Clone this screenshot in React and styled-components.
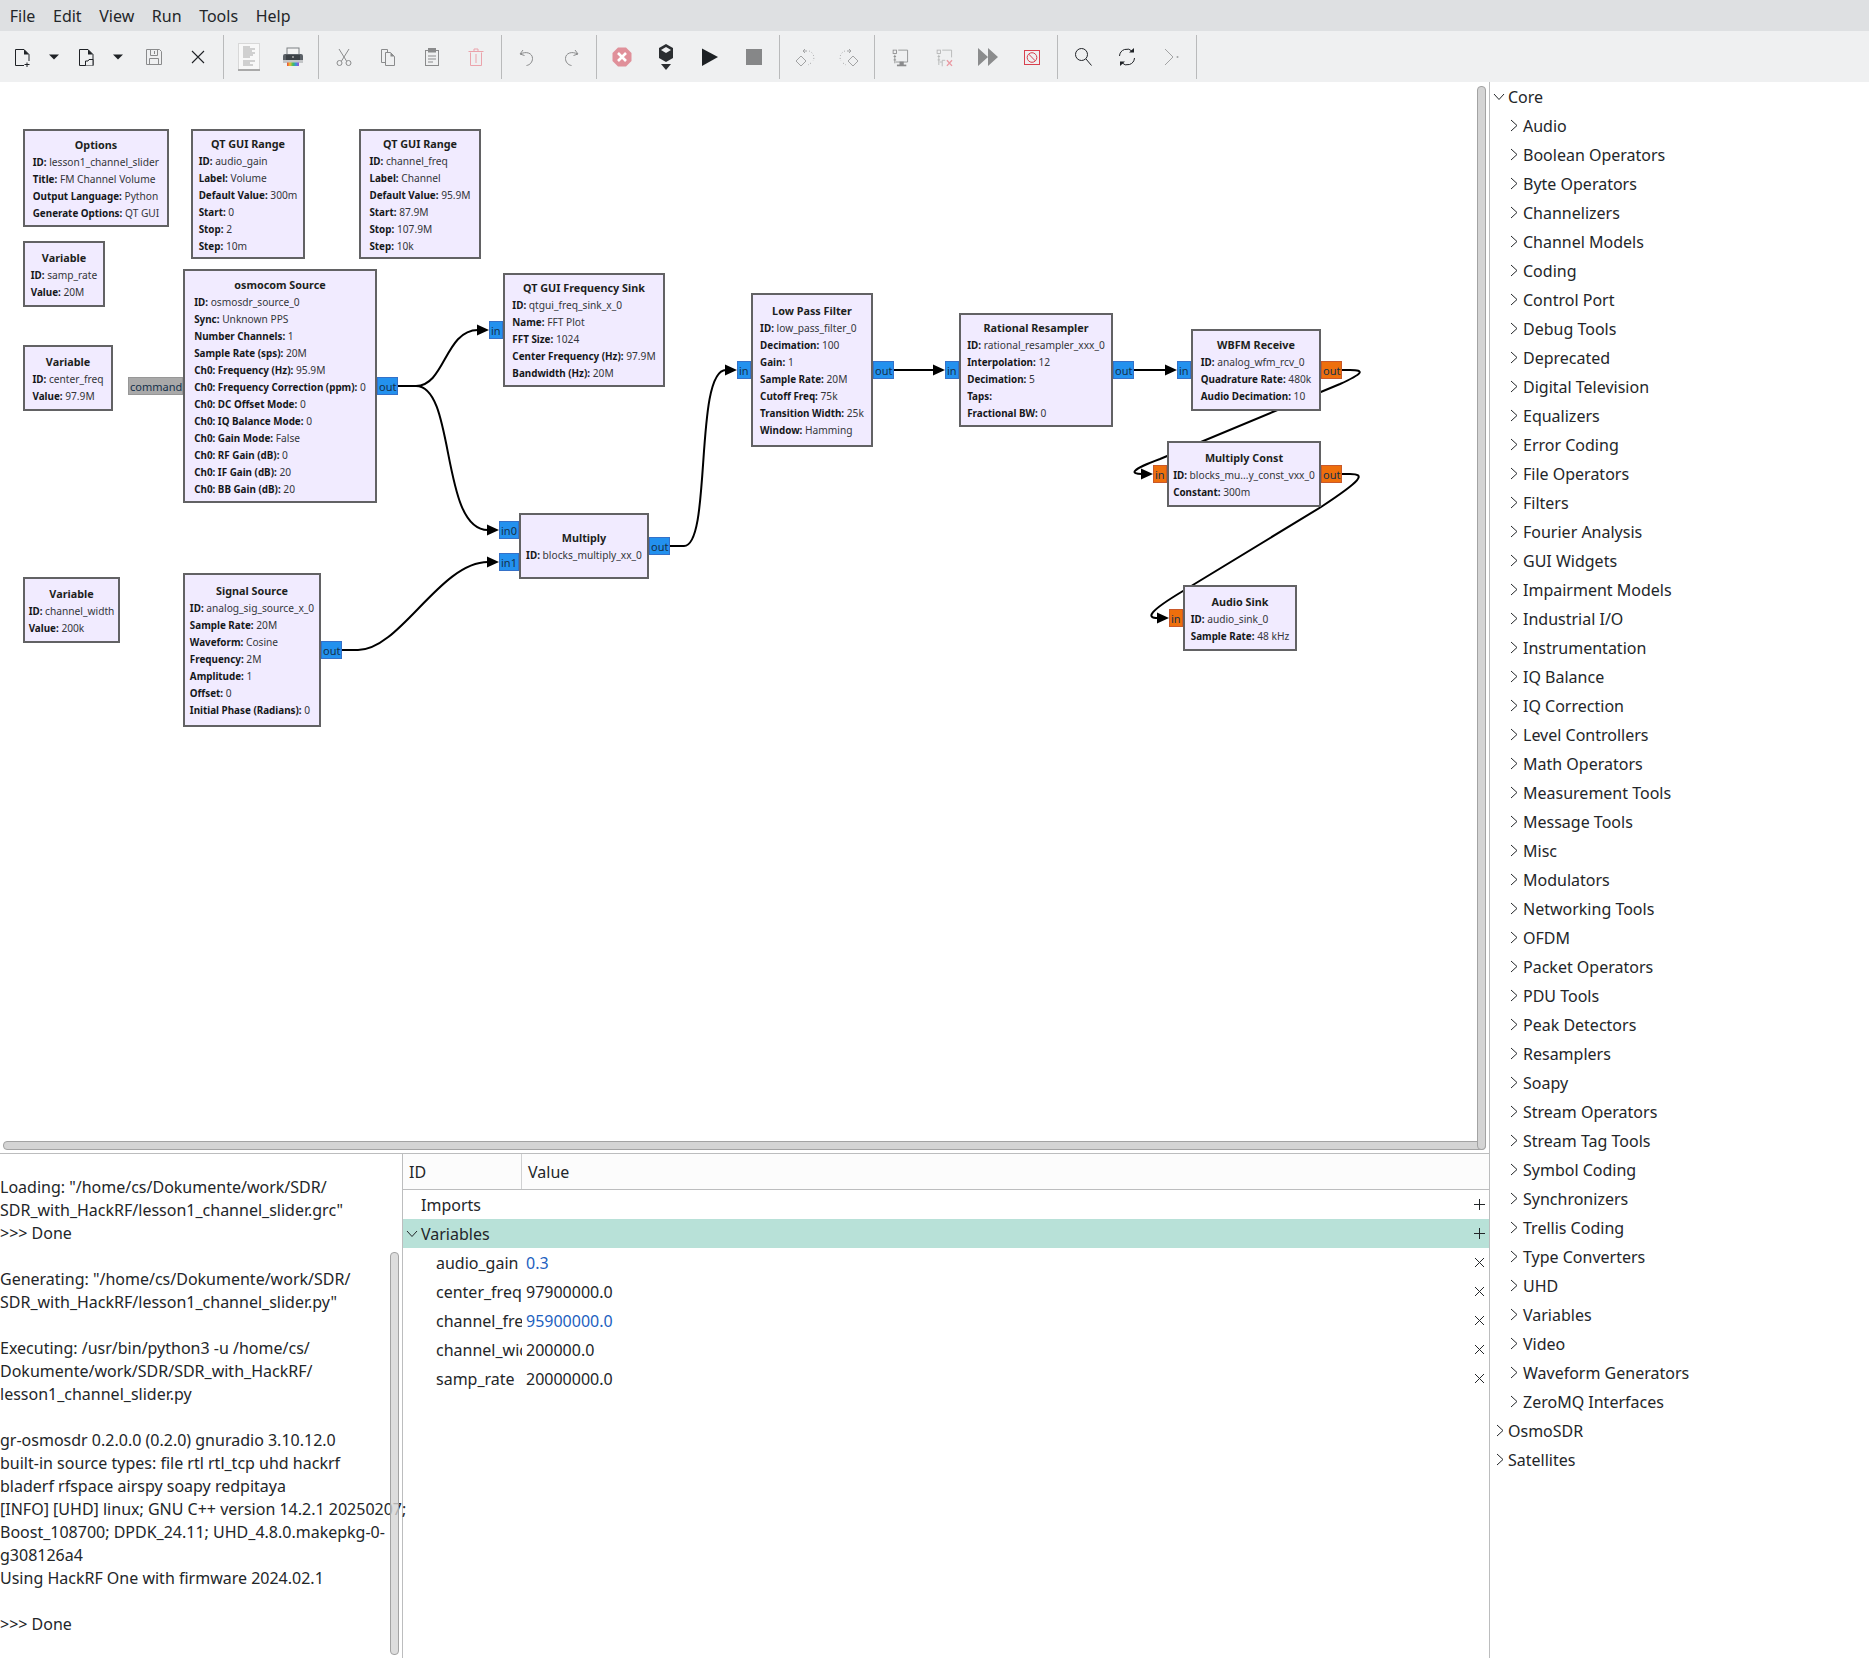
import React from 'react';
import styled, { createGlobalStyle } from 'styled-components';

const Global = createGlobalStyle`
  html, body { margin: 0; padding: 0; background: #fff; }
  body { font-family: "Noto Sans", sans-serif; color: #232629; }
`;

const Page = styled.div`
  width: 1869px; height: 1658px; display: flex; flex-direction: column; overflow: hidden;
  font-size: 16px; color: #232629;
`;
const MenuBar = styled.div`
  height: 31px; background: #dee0e2; display: flex; align-items: flex-start; padding-left: 1px; flex: none;
`;
const MenuItem = styled.div` padding: 0 8.8px; line-height: 32px; font-size: 16px; `;
const Toolbar = styled.div`
  height: 51px; background: #eff0f1; display: flex; align-items: center; flex: none;
`;
const ToolButton = styled.div`
  width: ${p => p.$w || 44}px; height: 51px; display: flex; align-items: center; justify-content: center; flex: none;
  margin-right: ${p => p.$mr || 0}px;
`;
const Sep = styled.div` width: 1px; height: 44px; background: #b9babb; margin: 0 3px; flex: none; `;
const Main = styled.div` flex: 1; display: flex; min-height: 0; `;
const LeftColumn = styled.div` width: 1489px; display: flex; flex-direction: column; flex: none; `;
const Canvas = styled.div` height: 1071px; position: relative; background: #fff; flex: none; overflow: hidden; `;
const Wires = styled.svg` position: absolute; left: 0; top: 0; `;
const HScroll = styled.div`
  position: absolute; left: 3px; top: 1059px; width: 1481px; height: 7px;
  background: #d4d4d4; border: 1px solid #a3a3a3; border-radius: 4px;
`;
const VScroll = styled.div`
  position: absolute; left: 1477px; top: 4px; width: 7px; height: 1062px;
  background: #d4d4d4; border: 1px solid #a3a3a3; border-radius: 4px;
`;
const Block = styled.div`
  position: absolute; box-sizing: border-box; border: 2px solid #626264; background: #f1ebff;
  display: flex; flex-direction: column; align-items: center; justify-content: center;
  line-height: 17px; color: #1d1f21; white-space: nowrap;
`;
const BlockTitle = styled.div` font-weight: 700; font-size: 10.8px; line-height: 19px; `;
const AttrList = styled.div` display: flex; flex-direction: column; `;
const Attr = styled.div` color: #34363a; font-size: 10.2px; `;
const AttrKey = styled.b` font-weight: 700; font-size: 9.85px; color: #15171a; `;
const Port = styled.div`
  position: absolute; box-sizing: border-box; top: ${p => p.$top}px; height: 18px; width: ${p => p.$w}px;
  ${p => p.$side === 'in' ? `right: calc(100% + 2px);` : `left: calc(100% + 2px);`}
  background: ${p => p.$kind === 'orange' ? '#ee6f0c' : p.$kind === 'gray' ? '#a9a9a9' : '#2391ee'};
  border: 1.5px solid ${p => p.$kind === 'orange' ? '#c9592a' : p.$kind === 'gray' ? '#979797' : '#3571c8'};
  font-size: 11px; line-height: 17px; color: #14304a; padding-left: 1px; overflow: hidden;
`;
const BottomRow = styled.div` flex: 1; display: flex; border-top: 1px solid #bcbdbe; min-height: 0; `;
const Console = styled.div`
  width: 403px; flex: none; position: relative; box-sizing: border-box; padding-top: 22px;
  font-size: 16px; line-height: 23px; white-space: pre; border-right: 1px solid #bcbdbe; background: #fff;
`;
const ConsoleScroll = styled.div`
  position: absolute; left: 390px; top: 98px; width: 7px; height: 401px;
  background: #d4d4d4cc; border: 1px solid #a3a3a3; border-radius: 4px;
`;
const TablePane = styled.div` flex: 1; display: flex; flex-direction: column; min-width: 0; `;
const TableHead = styled.div`
  height: 35px; background: #fcfcfc; border-bottom: 1px solid #bcbdbe; display: flex; flex: none;
`;
const HeadCell = styled.div`
  width: ${p => p.$w ? p.$w + 'px' : 'auto'}; box-sizing: border-box; padding-left: 6px; line-height: 36px; font-size: 16px;
  ${p => p.$w ? 'border-right: 1px solid #d0d1d2;' : ''}
`;
const VarRow = styled.div`
  height: 29px; display: flex; align-items: center; position: relative; font-size: 16px;
  background: ${p => p.$selected ? '#b8e1d8' : 'transparent'};
`;
const RowChevron = styled.span` width: 18px; padding-left: 3px; box-sizing: border-box; display: flex; flex: none; `;
const GroupName = styled.span` padding-left: ${p => p.$pad}px; `;
const VarName = styled.span` width: 86px; margin-left: 33px; overflow: hidden; white-space: nowrap; flex: none; `;
const VarValue = styled.span` margin-left: 4px; color: ${p => p.$edited ? '#1d5fc0' : '#232629'}; `;
const RowAction = styled.span` position: absolute; right: 1px; width: 18px; height: 18px; display: flex; align-items: center; justify-content: center; `;
const TreePane = styled.div` flex: 1; border-left: 1px solid #bcbdbe; font-size: 16px; `;
const TreeRow = styled.div`
  height: 29px; display: flex; align-items: center; padding-left: ${p => p.$level ? 20 : 3}px; white-space: nowrap;
`;
const TreeChevronBox = styled.span`
  width: ${p => p.$level ? 13 : 15}px; display: flex; flex: none;
  padding-left: ${p => p.$nudge || 0}px; box-sizing: border-box;
`;

const ChevR = ({ s = 15 }) => (
  <svg width="8" height={s} viewBox="0 0 8 15"><path d="M1 2 L7 7.5 L1 13" fill="none" stroke="#232629" strokeWidth="1" /></svg>
);
const ChevD = () => (
  <svg width="12" height="8" viewBox="0 0 12 8"><path d="M1 1 L6 6.5 L11 1" fill="none" stroke="#232629" strokeWidth="1" /></svg>
);

const G = '#8a8b8c';
const K = '#1f2226';
const S = ({ children, w = 22, h = 22 }) => (
  <svg width={w} height={h} viewBox={`0 0 ${w} ${h}`}>{children}</svg>
);

const icons = {
  new: <S><path d="M4.5 19.5V3.5H13L18 8.5V15M13 19.5H4.5" fill="none" stroke={K} /><path d="M13 3.5V8.5H18Z" fill={K} /><path d="M16 16.5V21M13.5 18.5H18.5" stroke={K} /></S>,
  open: <S><path d="M4.5 3.5H13L18 8.5V19.5H4.5Z" fill="none" stroke={K} /><path d="M13 3.5V8.5H18Z" fill={K} /><path d="M10.5 19.5V15H13L14 13.5H18V19.5" fill="#eff0f1" stroke={K} /></S>,
  drop: <S w={12} h={8}><path d="M1 1.5H11L6 6.5Z" fill={K} /></S>,
  save: <S><path d="M3.5 3.5H16.5L18.5 5.5V18.5H3.5Z" fill="none" stroke={G} /><path d="M7.5 3.5V9.5H14.5V3.5M6.5 18.5V12.5H15.5V18.5M11.5 5V8" fill="none" stroke={G} /></S>,
  close: <S><path d="M5 5L17 17M17 5L5 17" stroke={K} strokeWidth="1.1" /></S>,
  page: <S w={22} h={28}><rect x="0.5" y="0.5" width="21" height="26" fill="#f8f8f8" stroke="#d8d8d8" /><rect x="0" y="26" width="22" height="2" fill="#a9a9a9" /><path d="M5 4H12M5 6H17M5 8H14M5 10H17M5 12H15M5 14H12M5 18H17M5 20H12M5 22H15" stroke="#a8a8a8" strokeWidth="1" /></S>,
  print: <S h={20}><rect x="5" y="1" width="12" height="7" fill="#f4f4f4" stroke="#7d8083" /><path d="M1 9Q1 7 3 7H19Q21 7 21 9V16H1Z" fill="#5b6167" /><rect x="4" y="8" width="14" height="7" fill="#3c4146" /><circle cx="11" cy="10" r="1" fill="#aaa" /><rect x="1" y="13" width="20" height="3" fill="#c4c6c8" /><rect x="5" y="15.5" width="12" height="3.5" fill="url(#rb)" /><defs><linearGradient id="rb"><stop offset="0" stopColor="#e84b3c" /><stop offset=".25" stopColor="#f0c030" /><stop offset=".5" stopColor="#3cc060" /><stop offset=".75" stopColor="#3c90e0" /><stop offset="1" stopColor="#a050d0" /></linearGradient></defs></S>,
  cut: <S><path d="M6 3L13.5 15M16 3L8.5 15" stroke={G} fill="none" /><circle cx="6.5" cy="17" r="2.5" fill="none" stroke={G} /><circle cx="15.5" cy="17" r="2.5" fill="none" stroke={G} /></S>,
  copy: <S><path d="M4.5 3.5H10.5V6M4.5 3.5V16.5H8" fill="none" stroke={G} /><path d="M8.5 6.5H13.5L17.5 10.5V19.5H8.5Z" fill="none" stroke={G} /><path d="M13.5 6.5V10.5H17.5Z" fill={G} /></S>,
  paste: <S><rect x="4.5" y="4.5" width="13" height="15" fill="none" stroke={G} /><rect x="7" y="2" width="8" height="4.5" fill={G} /><path d="M7 10H15M7 13H15M7 16H12" stroke={G} /></S>,
  trash: <S><path d="M5.5 6.5V19.5H16.5V6.5M3.5 5.5H18.5M9 5V3H13V5M11 8V17" fill="none" stroke="#eba3ab" /></S>,
  undo: <S><path d="M7 4L4 8L8.5 9.5M4.5 8C10 5 16.5 7 16.5 12.5C16.5 16 14 19 10.5 19.5" fill="none" stroke={G} /></S>,
  redo: <S><path d="M15 4L18 8L13.5 9.5M17.5 8C12 5 5.5 7 5.5 12.5C5.5 16 8 19 11.5 19.5" fill="none" stroke={G} /></S>,
  kill: <S><path d="M7 1.5H15L20.5 7V15L15 20.5H7L1.5 15V7Z" fill="#e0909a" /><path d="M7 7L15 15M15 7L7 15" stroke="#fff" strokeWidth="2.6" /></S>,
  gen: <S h={28}><path d="M11 1L18 5V15L11 19L4 15V5Z" fill="#2b2e31" /><path d="M11 4L16 7L11 10L6 7Z" fill="#eff0f1" /><path d="M6 21H16L11 27Z" fill="#2b2e31" /></S>,
  play: <S><path d="M3 2.5L19 11L3 20Z" fill="#1d2124" /></S>,
  stop: <S><rect x="3" y="3" width="16" height="16" fill="#868788" /></S>,
  rotl: <S><path d="M7 10L12 15L7 20L2 15Z" fill="none" stroke="#a2a3a4" /><path d="M13 5H9M11 3L9 5L11 7" fill="none" stroke="#a2a3a4" /><path d="M15 5A7 7 0 0 1 19 15M17 17L14 19" fill="none" stroke="#a2a3a4" strokeDasharray="1 2" /></S>,
  rotr: <S><path d="M15 10L20 15L15 20L10 15Z" fill="none" stroke="#a2a3a4" /><path d="M9 5H13M11 3L13 5L11 7" fill="none" stroke="#a2a3a4" /><path d="M7 5A7 7 0 0 0 3 15M5 17L8 19" fill="none" stroke="#a2a3a4" strokeDasharray="1 2" /></S>,
  mon: <S><g transform="translate(2 2) scale(.85)"><path d="M8.5 2.5H19.5V16.5H5.5" fill="none" stroke={G} /><rect x="2.5" y="2.5" width="4" height="4" fill="none" stroke={G} /><path d="M4.5 8V18M3 10H6M3 14H6" stroke={G} /><rect x="10" y="16" width="5" height="4" fill={G} /><rect x="7" y="19.5" width="11" height="2" fill={G} /></g></S>,
  monx: <S><g transform="translate(2 2) scale(.85)"><path d="M8.5 2.5H19.5V11M5.5 16.5H8" fill="none" stroke="#b2b3b4" /><rect x="2.5" y="2.5" width="4" height="4" fill="none" stroke="#b2b3b4" /><path d="M4.5 8V20M3 10H6M3 14H6" stroke="#b2b3b4" /><path d="M8.5 21.5V14.5H12" fill="none" stroke="#b2b3b4" /><path d="M14 14.5L20 21M20 14.5L14 21" stroke="#ea9aa3" strokeWidth="1.6" /></g></S>,
  ff: <S><path d="M1 2L11 11L1 20ZM11 2L21 11L11 20Z" fill="#8b8c8d" /></S>,
  block: <S><rect x="3.5" y="4.5" width="15" height="14" fill="none" stroke="#d8404e" /><circle cx="11" cy="11.5" r="4.8" fill="none" stroke="#d8404e" /><path d="M7.8 8.2L14.2 14.8" stroke="#d8404e" /></S>,
  find: <S><circle cx="9.5" cy="8.5" r="6" fill="none" stroke={K} /><path d="M14 13L19.5 19.5" stroke={K} /></S>,
  reload: <S><path d="M3.5 10A7.5 7.5 0 0 1 16.5 5.5M18.5 12A7.5 7.5 0 0 1 5.5 16.5" fill="none" stroke={K} /><path d="M13 6.5H18V2Z" fill={K} /><path d="M9 15.5H4V20Z" fill={K} /></S>,
  term: <S><path d="M5 3L13 11L5 19" fill="none" stroke="#a2a3a4" /><circle cx="17.5" cy="11" r="1" fill="#a2a3a4" /></S>,
};

const toolbar = [
  ['new'], ['drop', 20], ['open'], ['drop', 20, 4], ['save'], ['close'], 'sep',
  ['page'], ['print'], 'sep',
  ['cut'], ['copy'], ['paste'], ['trash'], 'sep',
  ['undo'], ['redo'], 'sep',
  ['kill'], ['gen'], ['play'], ['stop'], 'sep',
  ['rotl'], ['rotr'], 'sep',
  ['mon'], ['monx'], ['ff'], ['block'], 'sep',
  ['find'], ['reload'], ['term'], 'sep',
];

const blocks = [
  { t: 'Options', x: 23, y: 129, w: 146, h: 98, a: [['ID', 'lesson1_channel_slider'], ['Title', 'FM Channel Volume'], ['Output Language', 'Python'], ['Generate Options', 'QT GUI']] },
  { t: 'QT GUI Range', x: 191, y: 129, w: 114, h: 130, a: [['ID', 'audio_gain'], ['Label', 'Volume'], ['Default Value', '300m'], ['Start', '0'], ['Stop', '2'], ['Step', '10m']] },
  { t: 'QT GUI Range', x: 359, y: 129, w: 122, h: 130, a: [['ID', 'channel_freq'], ['Label', 'Channel'], ['Default Value', '95.9M'], ['Start', '87.9M'], ['Stop', '107.9M'], ['Step', '10k']] },
  { t: 'Variable', x: 23, y: 241, w: 82, h: 66, a: [['ID', 'samp_rate'], ['Value', '20M']] },
  { t: 'Variable', x: 23, y: 345, w: 90, h: 66, a: [['ID', 'center_freq'], ['Value', '97.9M']] },
  { t: 'Variable', x: 23, y: 577, w: 97, h: 66, a: [['ID', 'channel_width'], ['Value', '200k']] },
  { t: 'osmocom Source', x: 183, y: 269, w: 194, h: 234, a: [['ID', 'osmosdr_source_0'], ['Sync', 'Unknown PPS'], ['Number Channels', '1'], ['Sample Rate (sps)', '20M'], ['Ch0: Frequency (Hz)', '95.9M'], ['Ch0: Frequency Correction (ppm)', '0'], ['Ch0: DC Offset Mode', '0'], ['Ch0: IQ Balance Mode', '0'], ['Ch0: Gain Mode', 'False'], ['Ch0: RF Gain (dB)', '0'], ['Ch0: IF Gain (dB)', '20'], ['Ch0: BB Gain (dB)', '20']],
    p: [{ s: 'in', k: 'gray', top: 106, w: 55, l: 'command' }, { s: 'out', top: 106, w: 21, l: 'out' }] },
  { t: 'QT GUI Frequency Sink', x: 503, y: 273, w: 162, h: 114, a: [['ID', 'qtgui_freq_sink_x_0'], ['Name', 'FFT Plot'], ['FFT Size', '1024'], ['Center Frequency (Hz)', '97.9M'], ['Bandwidth (Hz)', '20M']],
    p: [{ s: 'in', top: 46, w: 14, l: 'in' }] },
  { t: 'Low Pass Filter', x: 751, y: 293, w: 122, h: 154, a: [['ID', 'low_pass_filter_0'], ['Decimation', '100'], ['Gain', '1'], ['Sample Rate', '20M'], ['Cutoff Freq', '75k'], ['Transition Width', '25k'], ['Window', 'Hamming']],
    p: [{ s: 'in', top: 66, w: 14, l: 'in' }, { s: 'out', top: 66, w: 21, l: 'out' }] },
  { t: 'Multiply', x: 519, y: 513, w: 130, h: 66, a: [['ID', 'blocks_multiply_xx_0']],
    p: [{ s: 'in', top: 6, w: 20, l: 'in0' }, { s: 'in', top: 38, w: 20, l: 'in1' }, { s: 'out', top: 22, w: 21, l: 'out' }] },
  { t: 'Rational Resampler', x: 959, y: 313, w: 154, h: 114, a: [['ID', 'rational_resampler_xxx_0'], ['Interpolation', '12'], ['Decimation', '5'], ['Taps', ''], ['Fractional BW', '0']],
    p: [{ s: 'in', top: 46, w: 14, l: 'in' }, { s: 'out', top: 46, w: 21, l: 'out' }] },
  { t: 'WBFM Receive', x: 1191, y: 329, w: 130, h: 82, a: [['ID', 'analog_wfm_rcv_0'], ['Quadrature Rate', '480k'], ['Audio Decimation', '10']],
    p: [{ s: 'in', top: 30, w: 14, l: 'in' }, { s: 'out', k: 'orange', top: 30, w: 21, l: 'out' }] },
  { t: 'Multiply Const', x: 1167, y: 441, w: 154, h: 66, a: [['ID', 'blocks_mu...y_const_vxx_0'], ['Constant', '300m']],
    p: [{ s: 'in', k: 'orange', top: 22, w: 14, l: 'in' }, { s: 'out', k: 'orange', top: 22, w: 21, l: 'out' }] },
  { t: 'Audio Sink', x: 1183, y: 585, w: 114, h: 66, a: [['ID', 'audio_sink_0'], ['Sample Rate', '48 kHz']],
    p: [{ s: 'in', k: 'orange', top: 22, w: 14, l: 'in' }] },
  { t: 'Signal Source', x: 183, y: 573, w: 138, h: 154, a: [['ID', 'analog_sig_source_x_0'], ['Sample Rate', '20M'], ['Waveform', 'Cosine'], ['Frequency', '2M'], ['Amplitude', '1'], ['Offset', '0'], ['Initial Phase (Radians)', '0']],
    p: [{ s: 'out', top: 66, w: 21, l: 'out' }] },
];

const wires = [
  'M398 304H416C445 304 445 248 478 248',
  'M398 304H416C456 304 440 448 488 448',
  'M342 568H358C400 568 440 480 488 480',
  'M670 464H684C712 464 694 288 726 288',
  'M894 288H934',
  'M1134 288H1166',
  'M1342 288H1350C1366 288 1362 292 1340 302L1160 377C1130 388 1130 392 1142 392',
  'M1342 392H1350C1366 392 1362 398 1321 425L1183 509C1148 530 1146 536 1158 536',
];
const arrows = [[489, 248], [499, 448], [499, 480], [737, 288], [945, 288], [1177, 288], [1153, 392], [1169, 536]];

const consoleText = `Loading: "/home/cs/Dokumente/work/SDR/
SDR_with_HackRF/lesson1_channel_slider.grc"
>>> Done

Generating: "/home/cs/Dokumente/work/SDR/
SDR_with_HackRF/lesson1_channel_slider.py"

Executing: /usr/bin/python3 -u /home/cs/
Dokumente/work/SDR/SDR_with_HackRF/
lesson1_channel_slider.py

gr-osmosdr 0.2.0.0 (0.2.0) gnuradio 3.10.12.0
built-in source types: file rtl rtl_tcp uhd hackrf
bladerf rfspace airspy soapy redpitaya
[INFO] [UHD] linux; GNU C++ version 14.2.1 20250207;
Boost_108700; DPDK_24.11; UHD_4.8.0.makepkg-0-
g308126a4
Using HackRF One with firmware 2024.02.1

>>> Done`;

const variables = [
  ['audio_gain', '0.3', true],
  ['center_freq', '97900000.0'],
  ['channel_freq', '95900000.0', true],
  ['channel_width', '200000.0'],
  ['samp_rate', '20000000.0'],
];

const core = ['Audio', 'Boolean Operators', 'Byte Operators', 'Channelizers', 'Channel Models', 'Coding', 'Control Port', 'Debug Tools', 'Deprecated', 'Digital Television', 'Equalizers', 'Error Coding', 'File Operators', 'Filters', 'Fourier Analysis', 'GUI Widgets', 'Impairment Models', 'Industrial I/O', 'Instrumentation', 'IQ Balance', 'IQ Correction', 'Level Controllers', 'Math Operators', 'Measurement Tools', 'Message Tools', 'Misc', 'Modulators', 'Networking Tools', 'OFDM', 'Packet Operators', 'PDU Tools', 'Peak Detectors', 'Resamplers', 'Soapy', 'Stream Operators', 'Stream Tag Tools', 'Symbol Coding', 'Synchronizers', 'Trellis Coding', 'Type Converters', 'UHD', 'Variables', 'Video', 'Waveform Generators', 'ZeroMQ Interfaces'];

const Plus = () => <svg width="13" height="13" viewBox="0 0 13 13"><path d="M6.5 1V12M1 6.5H12" stroke="#232629" /></svg>;
const Cross = () => <svg width="11" height="11" viewBox="0 0 11 11"><path d="M1 1L10 10M10 1L1 10" stroke="#232629" /></svg>;

export default function App() {
  return (
    <Page>
      <Global />
      <MenuBar>
        {['File', 'Edit', 'View', 'Run', 'Tools', 'Help'].map(m => <MenuItem key={m}>{m}</MenuItem>)}
      </MenuBar>
      <Toolbar>
        {toolbar.map((t, i) => t === 'sep'
          ? <Sep key={i} />
          : <ToolButton key={i} $w={t[1]} $mr={t[2]}>{icons[t[0]]}</ToolButton>)}
      </Toolbar>
      <Main>
        <LeftColumn>
          <Canvas>
            <Wires width="1489" height="1071" viewBox="0 0 1489 1071">
              {wires.map((d, i) => <path key={i} d={d} fill="none" stroke="#000" strokeWidth="2" />)}
              {arrows.map(([x, y], i) => <path key={i} d={`M${x} ${y}L${x - 12} ${y - 5.5}V${y + 5.5}Z`} fill="#000" />)}
            </Wires>
            {blocks.map((b, i) => (
              <Block key={i} style={{ left: b.x, top: b.y - 82, width: b.w, height: b.h }}>
                <BlockTitle>{b.t}</BlockTitle>
                <AttrList>
                  {b.a.map(([k, v]) => <Attr key={k}><AttrKey>{k}:</AttrKey> {v}</Attr>)}
                </AttrList>
                {(b.p || []).map((p, j) => <Port key={j} $side={p.s} $kind={p.k} $top={p.top} $w={p.w}>{p.l}</Port>)}
              </Block>
            ))}
            <HScroll />
            <VScroll />
          </Canvas>
          <BottomRow>
            <Console>
              {consoleText}
              <ConsoleScroll />
            </Console>
            <TablePane>
              <TableHead>
                <HeadCell $w={119}>ID</HeadCell>
                <HeadCell>Value</HeadCell>
              </TableHead>
              <VarRow>
                <GroupName $pad={18}>Imports</GroupName>
                <RowAction><Plus /></RowAction>
              </VarRow>
              <VarRow $selected>
                <RowChevron><ChevD /></RowChevron>
                <GroupName $pad={0}>Variables</GroupName>
                <RowAction><Plus /></RowAction>
              </VarRow>
              {variables.map(([n, v, e]) => (
                <VarRow key={n}>
                  <VarName>{n}</VarName>
                  <VarValue $edited={e}>{v}</VarValue>
                  <RowAction><Cross /></RowAction>
                </VarRow>
              ))}
            </TablePane>
          </BottomRow>
        </LeftColumn>
        <TreePane>
          <TreeRow><TreeChevronBox><ChevD /></TreeChevronBox>Core</TreeRow>
          {core.map(c => <TreeRow key={c} $level={1}><TreeChevronBox $level={1}><ChevR /></TreeChevronBox>{c}</TreeRow>)}
          <TreeRow><TreeChevronBox $nudge={3}><ChevR /></TreeChevronBox>OsmoSDR</TreeRow>
          <TreeRow><TreeChevronBox $nudge={3}><ChevR /></TreeChevronBox>Satellites</TreeRow>
        </TreePane>
      </Main>
    </Page>
  );
}
